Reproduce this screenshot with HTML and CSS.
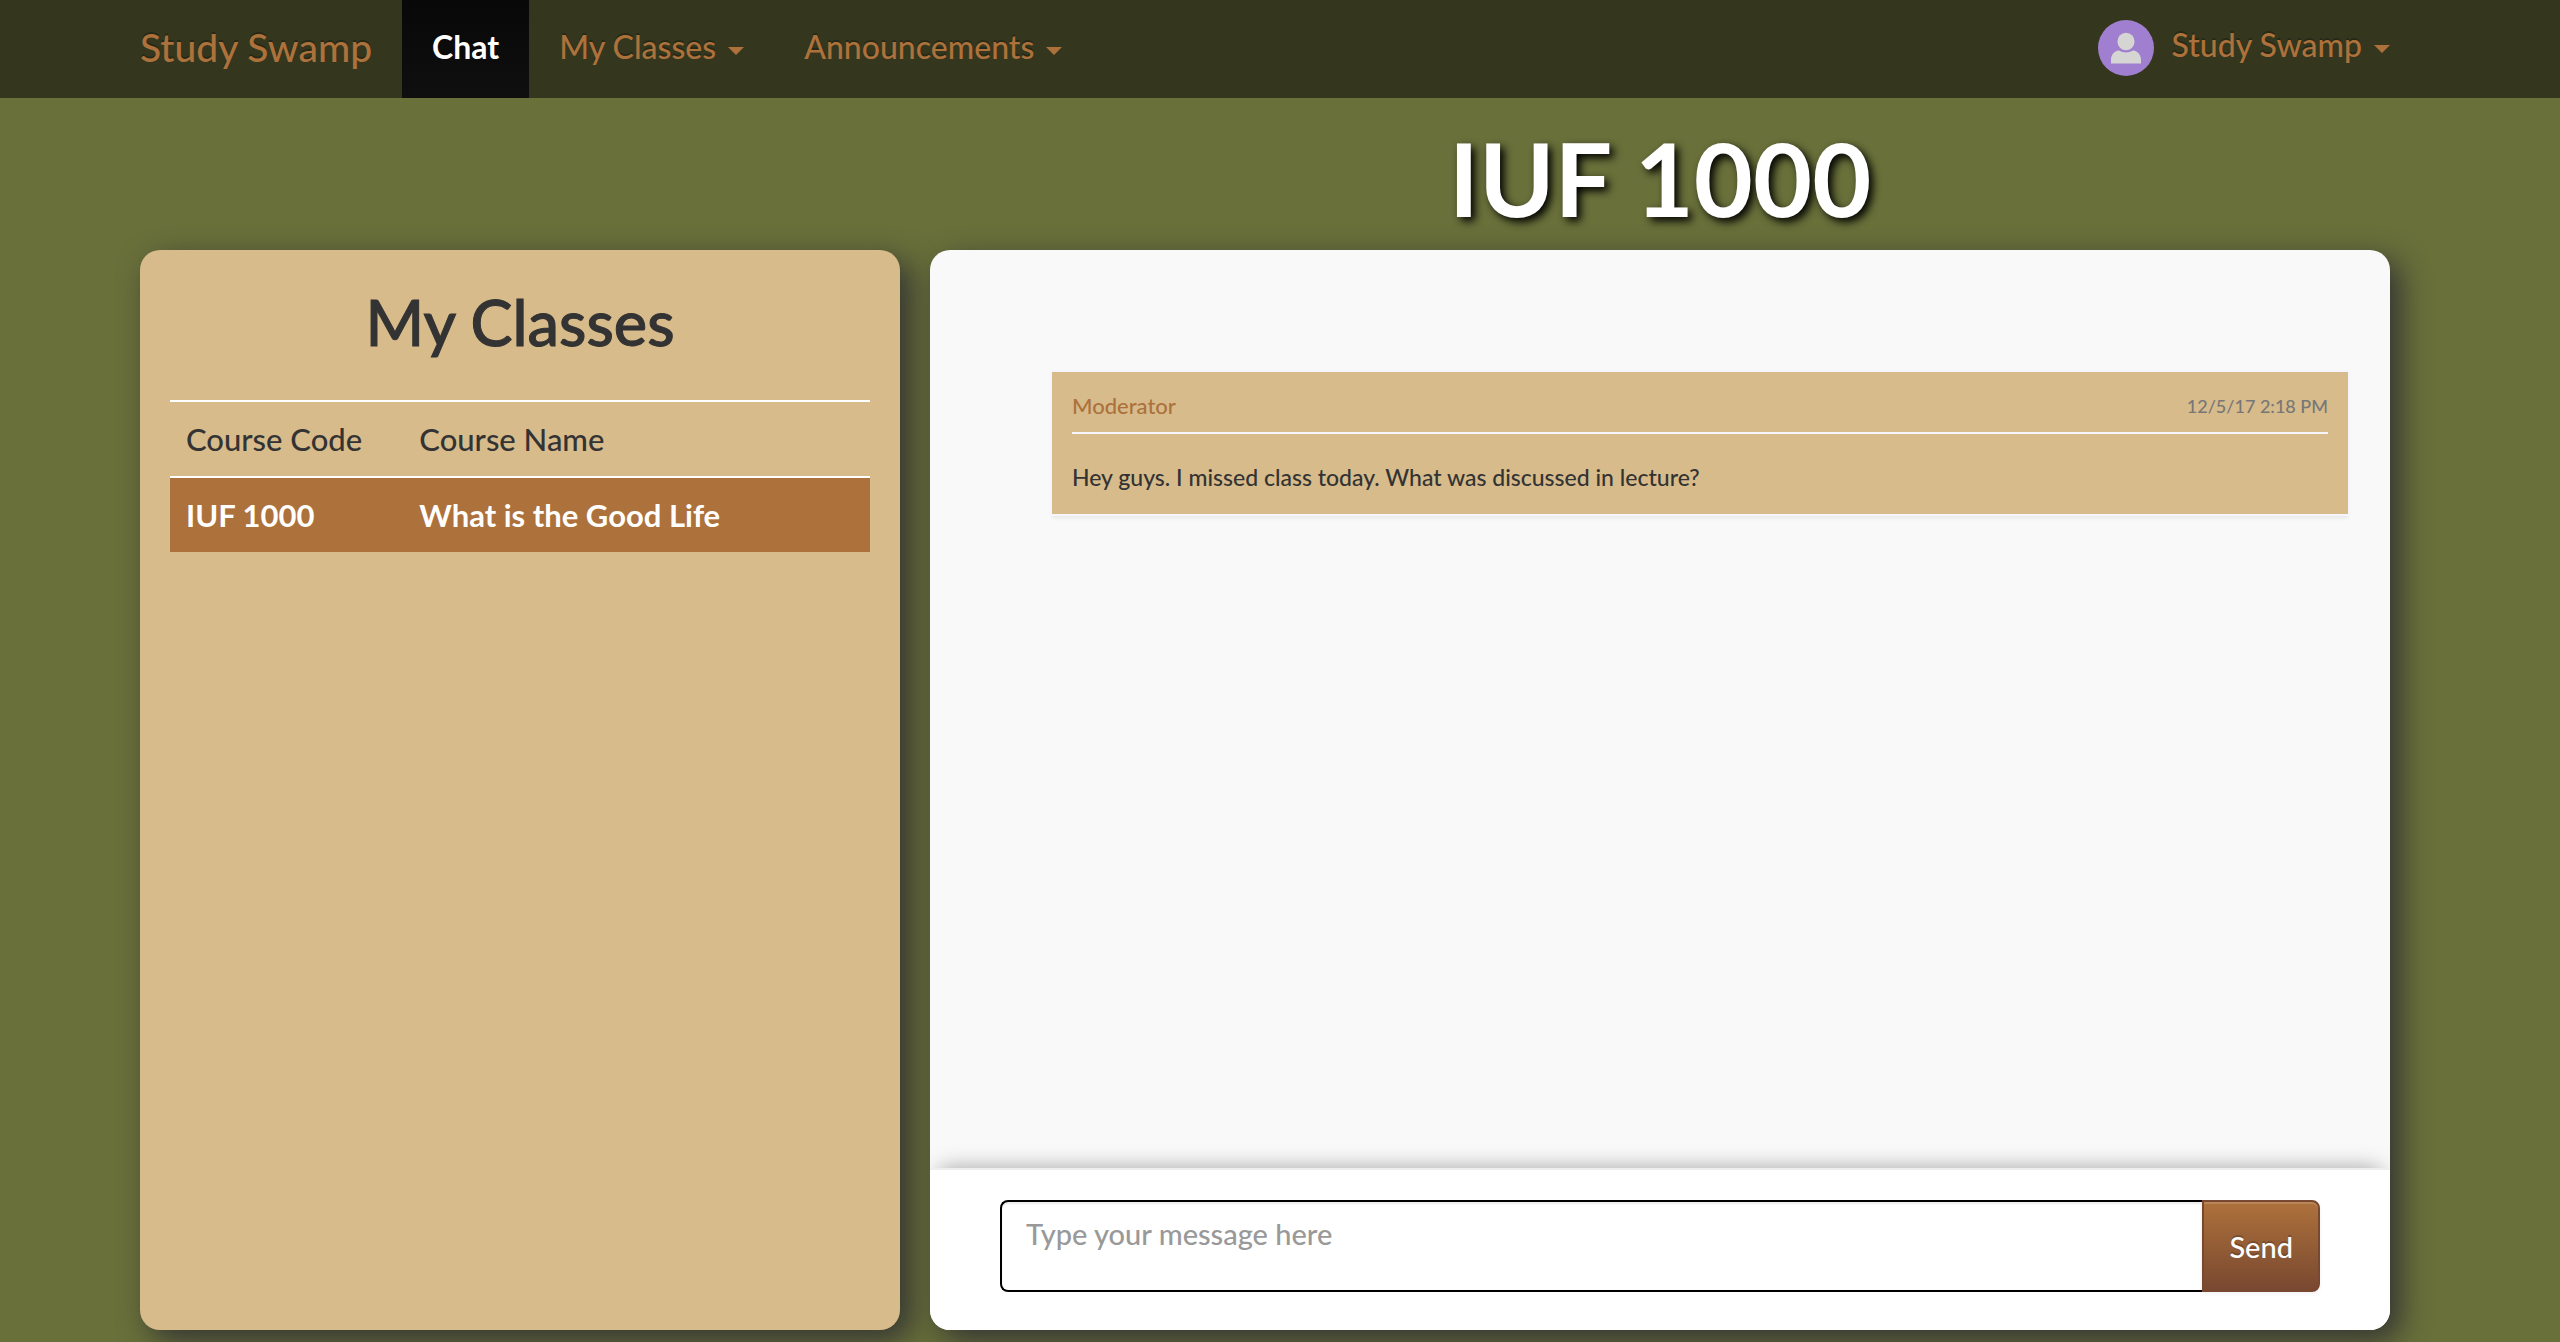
FILE: index.html
```html
<!DOCTYPE html>
<html lang="en">
<head>
  <meta charset="utf-8">
  <meta name="viewport" content="width=device-width, initial-scale=1">
  <title>Study Swamp</title>
  <link rel="stylesheet" href="styles.css">
</head>
<body>
  <header class="navbar">
    <nav class="navbar-inner">
      <a class="brand" href="#">Study Swamp</a>
      <ul class="nav-links">
        <li><a class="nav-link active" href="#">Chat</a></li>
        <li><a class="nav-link" href="#">My Classes<span class="caret"></span></a></li>
        <li><a class="nav-link" href="#">Announcements<span class="caret"></span></a></li>
      </ul>
      <a class="user-menu" href="#">
        <svg class="avatar" viewBox="0 0 56 56" aria-hidden="true">
          <circle cx="28" cy="28" r="28" fill="#a17fd0"/>
          <ellipse cx="28" cy="21.500" rx="8.500" ry="8.800" fill="#d5d6d3"/>
          <path d="M13 43.500V40c0-5 3-9 8-9.500 2 1.300 4.500 2 7 2s5-.7 7-2c5 .5 8 4.500 8 9.500v3.500z" fill="#d5d6d3"/>
        </svg>
        <span class="user-name">Study Swamp<span class="caret"></span></span>
      </a>
    </nav>
  </header>

  <main class="layout">
    <h1 class="room-title">IUF 1000</h1>

    <section class="card classes">
      <h2 class="classes-title">My Classes</h2>
      <table class="classes-table">
        <thead>
          <tr><th class="code" scope="col">Course Code</th><th scope="col">Course Name</th></tr>
        </thead>
        <tbody>
          <tr class="selected"><td>IUF 1000</td><td>What is the Good Life</td></tr>
        </tbody>
      </table>
    </section>

    <section class="card chat">
      <div class="messages">
        <article class="message">
          <header class="message-head">
            <span class="author">Moderator</span>
            <time class="sent" datetime="2017-12-05T14:18">12/5/17 2:18 PM</time>
          </header>
          <p class="message-body">Hey guys. I missed class today. What was discussed in lecture?</p>
        </article>
      </div>
      <form class="composer">
        <textarea class="composer-input" rows="1" aria-label="Message" placeholder="Type your message here"></textarea>
        <button class="send" type="button">Send</button>
      </form>
    </section>
  </main>
</body>
</html>
```
FILE: styles.css
```css
* {
  box-sizing: border-box;
}

body {
  display: flex;
  flex-direction: column;
  min-height: 100vh;
  margin: 0;
  background: #69703a;
  color: #333;
  font-family: Lato, "Liberation Sans", sans-serif;
  font-size: 31px;
  font-weight: 500;
}

/* Navigation bar */
.navbar {
  padding: 0 170px 0 140px;
  background: #34371e;
}

.navbar-inner {
  display: flex;
  align-items: flex-start;
}

.brand,
.nav-link {
  display: block;
  padding: 27px 30px 31px;
  line-height: 40px;
}

.brand,
.nav-link,
.user-menu {
  color: #ad713b;
  font-size: 32px;
  text-decoration: none;
  text-shadow: 0 -2px 0 rgba(0, 0, 0, 0.25);
  white-space: nowrap;
}

.brand {
  padding-left: 0;
  font-size: 39px;
}

.nav-links {
  display: flex;
  margin: 0;
  padding: 0;
  list-style: none;
}

.nav-link.active {
  background: linear-gradient(#080808, #0f0f0f);
  color: #fff;
  font-weight: 700;
}

.caret {
  display: inline-block;
  margin-left: 12px;
  border: 8px solid transparent;
  border-top-color: currentColor;
  border-bottom: 0;
  vertical-align: middle;
}

.user-menu {
  display: flex;
  gap: 18px;
  margin-left: auto;
  padding-top: 20px;
}

.avatar {
  width: 56px;
  height: 56px;
}

.user-name {
  line-height: 50px;
}

/* Page grid */
.layout {
  flex: 1;
  display: grid;
  grid-template-columns: 760fr 1460fr;
  grid-template-rows: auto 1fr;
  column-gap: 30px;
  padding: 20px 170px 12px 140px;
}

.room-title {
  grid-column: 2;
  margin: 0 0 12px;
  color: #fff;
  font-size: 102px;
  font-weight: 700;
  line-height: 120px;
  text-align: center;
  text-shadow: 4px 4px 8px #000;
}

.card {
  border-radius: 20px;
  box-shadow: 10px 10px 30px #333;
}

/* Class list */
.classes {
  padding: 32px 30px 30px;
  background: #d7bb8b;
}

.classes-title {
  margin: 0 0 38px;
  font-size: 63px;
  font-weight: 500;
  line-height: 80px;
  text-align: center;
  -webkit-text-stroke: 1px #333;
}

.classes-table {
  width: 100%;
  border-spacing: 0;
  line-height: 42px;
  table-layout: fixed;
}

.classes-table th,
.classes-table td {
  padding: 16px;
  font-weight: 500;
  text-align: left;
}

.classes-table th {
  border: solid #fff;
  border-width: 2px 0;
}

.classes-table .code {
  width: 33.33%;
}

.classes-table .selected td {
  background: #ad713b;
  color: #fff;
  font-weight: 700;
}

/* Chat */
.chat {
  display: flex;
  flex-direction: column;
  overflow: hidden;
  background: #f9f9f9;
}

.messages {
  flex: 1;
  padding: 122px 42px 42px 122px;
}

.message {
  padding: 20px 20px 22px;
  background: #d7bb8b;
  box-shadow: 0 0 0 2px #f4f6fb, 0 4px 4px rgba(0, 0, 0, 0.08);
}

.message-head {
  display: flex;
  justify-content: space-between;
  padding-bottom: 12px;
  border-bottom: 2px solid #f4f6fb;
  line-height: 28px;
}

.author {
  color: #ad713b;
  font-size: 22px;
}

.sent {
  color: #777;
  font-size: 18px;
}

.message-body {
  margin: 28px 0 0;
  font-size: 23px;
  line-height: 30px;
}

.composer {
  display: flex;
  padding: 30px 70px 38px;
  border-top: 2px solid #eee;
  background: #fff;
  box-shadow: 0 -10px 20px -10px rgba(0, 0, 0, 0.35);
}

.composer-input {
  flex: 1;
  height: 92px;
  padding: 12px 24px;
  border: 2px solid #000;
  border-right: 0;
  border-radius: 8px 0 0 8px;
  background: #fff;
  color: #333;
  font: inherit;
  font-size: 29px;
  line-height: 40px;
  box-shadow: inset 0 2px 2px rgba(0, 0, 0, 0.08);
  resize: none;
}

.composer-input::placeholder {
  color: #999;
  opacity: 1;
}

.send {
  padding: 0 25px;
  border: 2px solid #794830;
  border-radius: 0 8px 8px 0;
  background: linear-gradient(#ad713b, #794830);
  box-shadow: inset 0 2px 0 rgba(255, 255, 255, 0.15), 0 2px 4px rgba(0, 0, 0, 0.05);
  color: #fff;
  font: inherit;
  font-size: 29px;
  text-shadow: 0 -2px 0 rgba(0, 0, 0, 0.2);
}
```
